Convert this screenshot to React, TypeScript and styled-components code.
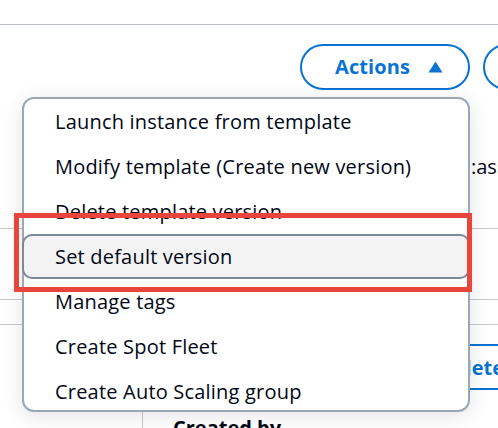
import React from "react";
import styled, { createGlobalStyle } from "styled-components";

const Global = createGlobalStyle`
  html, body { margin: 0; padding: 0; background: #ffffff; }
  body { font-family: "Open Sans", "Noto Sans", sans-serif; color: #000716; }
  * { box-sizing: border-box; }
`;

const Page = styled.div`
  position: relative;
  width: 498px;
  height: 428px;
  overflow: hidden;
  background: #ffffff;
`;

const TopRule = styled.div`
  height: 25px;
  border-bottom: 1px solid #b8bfc9;
`;

const Toolbar = styled.div`
  display: flex;
  gap: 13px;
  height: 65px;
  padding: 19px 0 0 300px;
`;

const ActionsWrap = styled.div`
  position: relative;
  flex-shrink: 0;
`;

const PillButton = styled.button<{ $width: number }>`
  display: flex;
  align-items: center;
  gap: 18px;
  flex-shrink: 0;
  width: ${(p) => p.$width}px;
  height: 46px;
  padding: 0 0 0 33px;
  border: 2px solid #0972d3;
  border-radius: 23px;
  background: #ffffff;
  color: #0972d3;
  font-family: "Open Sans", "Noto Sans", sans-serif;
  font-weight: 700;
  font-size: 20px;
  line-height: 1;
  letter-spacing: 0.1px;
`;

const Caret = styled.svg`
  width: 15px;
  height: 12px;
  display: block;
`;

const Menu = styled.div`
  position: absolute;
  right: 0;
  top: calc(100% + 7px);
  width: 448px;
  height: 315px;
  border: 2px solid #9ba7b6;
  border-radius: 12px;
  background: #ffffff;
  box-shadow: 0 4px 20px 1px rgba(0, 7, 22, 0.1);
  z-index: 5;
`;

const MenuList = styled.ul`
  list-style: none;
  margin: 0;
  padding: 0;
  height: 100%;
`;

const MenuItem = styled.li<{ $active?: boolean }>`
  display: flex;
  align-items: center;
  height: 45px;
  padding-left: 31px;
  margin: 0 ${(p) => (p.$active ? "-2px" : "0")};
  border: ${(p) => (p.$active ? "2px solid #7d8998" : "none")};
  border-radius: 10px;
  background: ${(p) => (p.$active ? "#f3f3f3" : "transparent")};
  font-size: 20px;
  line-height: 26px;
  letter-spacing: 0.2px;
  color: #000716;
  white-space: nowrap;
`;

const Body = styled.div`
  display: flex;
  flex-direction: column;
`;

const DetailValue = styled.div`
  margin-top: 64px;
  height: 26px;
  padding-left: 471px;
  font-size: 20px;
  line-height: 26px;
  white-space: nowrap;
  color: #000716;
`;

const Rule = styled.div<{ $gap: number }>`
  margin-top: ${(p) => p.$gap}px;
  height: 1px;
  background: #c6c6cd;
`;

const SecondaryRow = styled.div`
  display: flex;
  margin-top: 19px;
  padding-left: 417px;
`;

const OutlineButton = styled.button`
  flex-shrink: 0;
  height: 46px;
  padding: 0 20px;
  border: 2px solid #0972d3;
  border-radius: 23px;
  background: #ffffff;
  color: #0972d3;
  font-family: "Open Sans", "Noto Sans", sans-serif;
  font-weight: 700;
  font-size: 20px;
  white-space: nowrap;
`;

const TableHead = styled.div`
  display: flex;
  margin-top: 21px;
  height: 30px;
`;

const HeadSpacer = styled.div`
  width: 143px;
  border-right: 1px solid #c6c6cd;
`;

const HeadCell = styled.div`
  padding: 4px 0 0 30px;
  font-weight: 700;
  font-size: 20px;
  line-height: 26px;
  color: #000716;
  white-space: nowrap;
`;

const Callout = styled.div`
  position: absolute;
  left: 14px;
  top: 213px;
  width: 458px;
  height: 79px;
  border: 5px solid #e8453c;
  z-index: 10;
  pointer-events: none;
`;

const items = [
  "Launch instance from template",
  "Modify template (Create new version)",
  "Delete template version",
  "Set default version",
  "Manage tags",
  "Create Spot Fleet",
  "Create Auto Scaling group",
];

export default function App() {
  return (
    <>
      <Global />
      <Page>
        <TopRule />
        <Toolbar>
          <ActionsWrap>
            <PillButton $width={170}>
              Actions
              <Caret viewBox="0 0 15 12">
                <path d="M7.5 0.5 L14.5 11.5 L0.5 11.5 Z" fill="#0972d3" />
              </Caret>
            </PillButton>
            <Menu>
              <MenuList>
                {items.map((label, i) => (
                  <MenuItem key={label} $active={i === 3}>
                    {label}
                  </MenuItem>
                ))}
              </MenuList>
            </Menu>
          </ActionsWrap>
          <PillButton $width={120}>Create</PillButton>
        </Toolbar>
        <Body>
          <DetailValue>:assumed-role/Admin</DetailValue>
          <Rule $gap={48} />
          <Rule $gap={70} />
          <Rule $gap={24} />
          <SecondaryRow>
            <OutlineButton>Delete</OutlineButton>
          </SecondaryRow>
          <TableHead>
            <HeadSpacer />
            <HeadCell>Created by</HeadCell>
          </TableHead>
        </Body>
        <Callout />
      </Page>
    </>
  );
}
